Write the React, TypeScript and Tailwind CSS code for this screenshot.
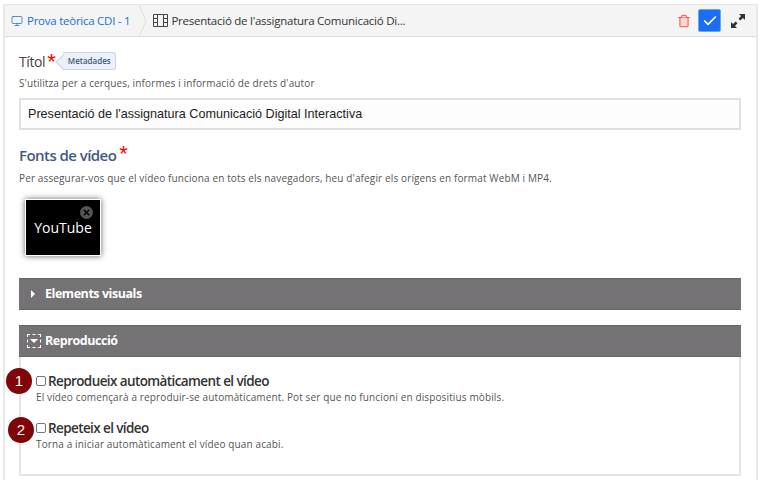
import { Monitor, Check, Trash2, X } from "lucide-react"

function Required() {
    return <span className="text-[22px] leading-none text-[#f00] font-['Liberation_Sans',sans-serif]">*</span>
}

function Option({ n, label, help, badgeClass }: { n: number; label: string; help: string; badgeClass: string }) {
    return (
        <div className="relative pl-[15px]">
            {/* Numbered callout */}
            <div className={`absolute flex h-[26px] w-[26px] items-center justify-center rounded-full bg-[#7f0508] text-[15px] text-white font-['Liberation_Sans',sans-serif] ${badgeClass}`}>
                {n}
            </div>
            <div className="flex h-[22px] items-center gap-[2px]">
                <input type="checkbox" className="m-0 h-[10px] w-[10px] appearance-none rounded-[2px] border border-[#777] bg-white" />
                <span className="text-[13.500px] font-semibold tracking-[-0.6px] text-[#333]">{label}</span>
            </div>
            <p className="mt-[-2px] text-[10px] leading-[14px] tracking-[0.13px] text-[#555]">{help}</p>
        </div>
    )
}

export default function App() {
    return (
        <div className="h-[480px] w-[765px] overflow-hidden bg-white pl-[3px] pt-[4px] font-['Open_Sans',sans-serif]">
            <div className="h-[480px] w-[755px] border-x-[2px] border-t-[1px] border-[#e8e8e8]">
                {/* Top bar */}
                <div className="flex h-[32px] items-center border-b border-[#dcdcdc] bg-[#f4f4f4] text-[11.500px] tracking-[-0.25px]">
                    <div className="flex items-center gap-[4px] pl-[6px] text-[#1a6fd8]">
                        <Monitor className="h-[12px] w-[12px]" strokeWidth={1.5} />
                        <span>Prova teòrica CDI - 1</span>
                    </div>
                    <svg viewBox="0 0 8 32" className="ml-[9px] h-[32px] w-[8px] text-[#dcdcdc]" fill="none" stroke="currentColor">
                        <path d="M0 0 L7 16 L0 32" />
                    </svg>
                    <div className="ml-[6px] flex items-center gap-[3px] text-[#333]">
                        <svg viewBox="0 0 15 13" className="h-[13px] w-[15px] text-[#444]" fill="none" stroke="currentColor">
                            <path d="M.5.500h14v12H.5zM4.500.500v12M10.500.500v12M.5 4.500h4M.5 8.500h4M10.500 4.500h4M10.500 8.500h4" />
                        </svg>
                        <span>Presentació de l'assignatura Comunicació Di...</span>
                    </div>
                    <div className="ml-auto flex items-center">
                        <Trash2 className="h-[14px] w-[14px] fill-[#fbd5d0] text-[#f4574e]" strokeWidth={1.8} />
                        <div className="ml-[7px] flex h-[23px] w-[23px] items-center justify-center rounded-[2px] border border-[#6aa5f5] bg-[#1b6ef3]">
                            <Check className="h-[16px] w-[16px] text-white" strokeWidth={2.5} />
                        </div>
                        <svg viewBox="0 0 16 16" className="ml-[9px] mr-[10px] h-[16px] w-[16px] text-[#333]" fill="currentColor">
                            <path d="M9 1h6v6l-2-2-2.6 2.6-1.9-1.9L11 3.1zM7 15H1V9l2 2 2.6-2.6 1.9 1.9L5 12.900z" />
                        </svg>
                    </div>
                </div>

                <div className="pl-[14px] pr-[15px]">
                    {/* Title */}
                    <div className="mt-[14px] flex h-[20px] items-center">
                        <span className="text-[14px] font-medium tracking-[-0.4px] text-[#444]">Títol</span>
                        <span className="ml-[2px] mt-[4px]"><Required /></span>
                        <div className="relative ml-[7px] flex h-[18px] items-center rounded-r-[3px] border border-l-0 border-[#c6d6e6] bg-[#eaf1f8] pl-[5px] pr-[4px] text-[8px] font-semibold text-[#44597a]">
                            <span className="absolute left-[-5px] top-[2.500px] h-[12px] w-[12px] rotate-45 border-b border-l border-[#c6d6e6] bg-[#eaf1f8]" />
                            <span className="relative">Metadades</span>
                        </div>
                    </div>
                    <p className="mt-[5px] text-[10px] leading-[14px] tracking-[0.13px] text-[#555]">
                        S'utilitza per a cerques, informes i informació de drets d'autor
                    </p>
                    <div className="mt-[8px] flex h-[32px] items-center border-2 border-[#e0e0e0] bg-[#fdfdfd] pl-[7px] text-[12.600px] text-[#222] font-['Liberation_Sans',sans-serif]">
                        Presentació de l'assignatura Comunicació Digital Interactiva
                    </div>

                    {/* Video sources */}
                    <div className="mt-[12px] flex h-[26px] items-center">
                        <span className="text-[15px] font-semibold tracking-[-0.55px] text-[#3f5a84]">Fonts de vídeo</span>
                        <span className="ml-[3px] mt-[-1px]"><Required /></span>
                    </div>
                    <p className="mt-[3px] text-[10px] leading-[14px] tracking-[0.13px] text-[#555]">
                        Per assegurar-vos que el vídeo funciona en tots els navegadors, heu d'afegir els orígens en format WebM i MP4.
                    </p>
                    <div className="relative ml-[6px] mt-[14px] flex h-[57px] w-[76px] items-center justify-center border border-white bg-black text-[14px] text-white shadow-[0_0_6px_rgba(0,0,0,0.6)]">
                        YouTube
                        <div className="absolute right-[7px] top-[6px] flex h-[13px] w-[13px] items-center justify-center rounded-full bg-[#555]">
                            <X className="h-[9px] w-[9px] text-black" strokeWidth={4} />
                        </div>
                    </div>

                    {/* Collapsed group */}
                    <div className="mt-[22px] flex h-[32px] items-center border-y border-[#666] bg-[#747274] pl-[12px] text-[12.500px] font-bold tracking-[-0.45px] text-white">
                        <span className="h-0 w-0 border-y-[4px] border-l-[4px] border-y-transparent border-l-white" />
                        <span className="ml-[10px]">Elements visuals</span>
                    </div>

                    {/* Expanded group */}
                    <div className="mt-[15px] h-[151px] border-x-2 border-b-2 border-[#e4e4e4]">
                        <div className="-mx-[2px] flex h-[32px] items-center border-y border-[#666] bg-[#747274] pl-[8px] text-[12.500px] font-bold tracking-[-0.45px] text-white">
                            <div className="flex h-[14px] w-[14px] items-center justify-center border border-dashed border-white">
                                <span className="h-0 w-0 border-x-[4px] border-t-[4px] border-x-transparent border-t-white" />
                            </div>
                            <span className="ml-[4px]">Reproducció</span>
                        </div>
                        <div className="mt-[13px] flex flex-col gap-[13px]">
                            <Option n={1} badgeClass="left-[-15px] top-[-2px]" label="Reprodueix automàticament el vídeo" help="El vídeo començarà a reproduir-se automàticament. Pot ser que no funcioni en dispositius mòbils." />
                            <Option n={2} badgeClass="left-[-13px] top-[0px]" label="Repeteix el vídeo" help="Torna a iniciar automàticament el vídeo quan acabi." />
                        </div>
                    </div>
                </div>
            </div>
        </div>
    )
}
